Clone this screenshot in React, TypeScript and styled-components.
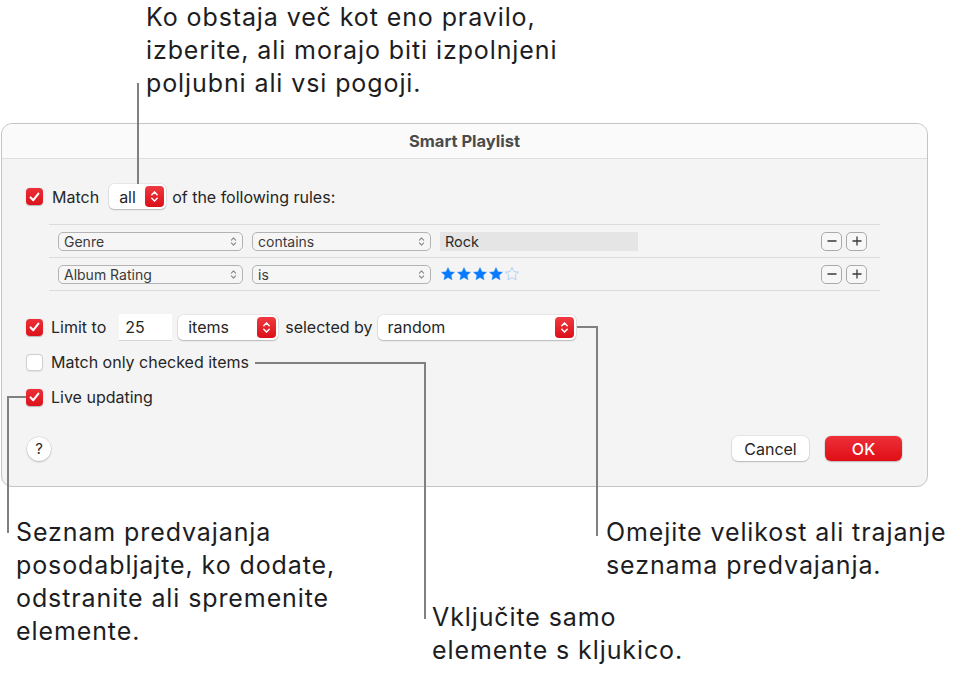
import * as React from "react";
import styled, { createGlobalStyle } from "styled-components";

const GlobalStyle = createGlobalStyle`
  html, body {
    margin: 0;
    padding: 0;
    background: #ffffff;
  }
  body {
    font-family: Inter, "Liberation Sans", sans-serif;
    color: #1d1d1f;
    -webkit-font-smoothing: antialiased;
  }
`;

const Figure = styled.div`
  position: relative;
  width: 968px;
  height: 673px;
  overflow: hidden;
  background: #ffffff;
`;

const Note = styled.div<{ $left: number; $top: number; $width?: number }>`
  flex: none;
  margin-left: ${(p) => p.$left}px;
  margin-top: ${(p) => p.$top}px;
  width: ${(p) => (p.$width ? `${p.$width}px` : "auto")};
  font-size: 25px;
  letter-spacing: 0.9px;
  line-height: 33px;
  white-space: nowrap;
  color: #1d1d1f;
`;

const BottomNotes = styled.div`
  display: flex;
  align-items: flex-start;
`;

const Dialog = styled.div`
  margin: 23px 0 0 1px;
  width: 927px;
  box-sizing: border-box;
  border: 1px solid #c4c4c4;
  border-radius: 11px;
  background: #f4f4f4;
  overflow: hidden;
`;

const TitleBar = styled.div`
  height: 34px;
  display: flex;
  align-items: center;
  justify-content: center;
  background: #fafafa;
  border-bottom: 1px solid #dedede;
  font-size: 16.5px;
  font-weight: 700;
  color: #4b4b4b;
`;

const Body = styled.div`
  padding: 0 25px 25px 24px;
  display: flex;
  flex-direction: column;
  font-size: 16px;
  color: #262626;
`;

const Row = styled.div<{ $mt: number; $h: number }>`
  display: flex;
  align-items: center;
  margin-top: ${(p) => p.$mt}px;
  height: ${(p) => p.$h}px;
`;

const Label = styled.span<{ $ml?: number }>`
  margin-left: ${(p) => p.$ml ?? 0}px;
  white-space: nowrap;
`;

const Box = styled.span<{ $checked: boolean }>`
  flex: none;
  width: 17px;
  height: 17px;
  box-sizing: border-box;
  border-radius: 4px;
  display: flex;
  align-items: center;
  justify-content: center;
  background: ${(p) =>
    p.$checked ? "linear-gradient(#ec2f37, #dc121b)" : "#ffffff"};
  border: ${(p) => (p.$checked ? "none" : "1px solid #cfcfcf")};
  box-shadow: ${(p) =>
    p.$checked ? "0 0.5px 1px rgba(0,0,0,0.25)" : "0 0.5px 1px rgba(0,0,0,0.08)"};
`;

const SelectBox = styled.div<{ $w: number; $ml: number }>`
  flex: none;
  width: ${(p) => p.$w}px;
  margin-left: ${(p) => p.$ml}px;
  height: 25px;
  box-sizing: border-box;
  display: flex;
  align-items: center;
  justify-content: space-between;
  padding: 0 2px 0 10px;
  background: #ffffff;
  border-radius: 5px;
  box-shadow: 0 0 0 0.5px rgba(0, 0, 0, 0.1), 0 1px 1.5px rgba(0, 0, 0, 0.2);
`;

const Stepper = styled.span`
  width: 19px;
  height: 21px;
  border-radius: 4px;
  background: linear-gradient(#ef3a40, #dc0f18);
  display: flex;
  align-items: center;
  justify-content: center;
`;

const NumField = styled.div`
  flex: none;
  width: 53px;
  height: 26px;
  margin-left: 13px;
  box-sizing: border-box;
  padding-left: 6px;
  display: flex;
  align-items: center;
  background: #ffffff;
  box-shadow: 0 1px 0 rgba(0, 0, 0, 0.12);
`;

const RulesBox = styled.div`
  margin: 15px 0 0 23px;
  width: 831px;
  border-bottom: 1px solid #dcdcdc;
`;

const RuleRow = styled.div`
  height: 32px;
  border-top: 1px solid #dcdcdc;
  display: flex;
  align-items: center;
  gap: 9px;
  padding: 0 13px 0 9px;
`;

const RuleSelect = styled.div<{ $w: number }>`
  flex: none;
  width: ${(p) => p.$w}px;
  height: 19px;
  box-sizing: border-box;
  border: 1px solid #b3b3b3;
  border-radius: 5px;
  display: flex;
  align-items: center;
  justify-content: space-between;
  padding: 0 5px 0 5px;
  font-size: 14px;
  color: #3a3a3a;
  background: #f6f6f6;
`;

const ValueField = styled.div`
  flex: none;
  width: 198px;
  height: 19px;
  background: #e5e5e5;
  display: flex;
  align-items: center;
  padding-left: 5px;
  box-sizing: border-box;
  font-size: 14.5px;
  color: #2a2a2a;
`;

const Stars = styled.div`
  display: flex;
  width: 198px;
`;

const Spacer = styled.div`
  flex: 1;
`;

const IconBtns = styled.div`
  display: flex;
  gap: 4px;
`;

const IconBtn = styled.span`
  width: 21px;
  height: 19px;
  box-sizing: border-box;
  border: 1px solid #a9a9a9;
  border-radius: 5px;
  background: #f7f7f7;
  display: flex;
  align-items: center;
  justify-content: center;
`;

const Footer = styled.div`
  margin-top: 30px;
  display: flex;
  align-items: center;
`;

const HelpBtn = styled.span`
  width: 24px;
  height: 24px;
  margin-left: 1px;
  border-radius: 50%;
  background: #ffffff;
  box-shadow: 0 0 0 0.5px rgba(0, 0, 0, 0.12), 0 1px 2px rgba(0, 0, 0, 0.2);
  display: flex;
  align-items: center;
  justify-content: center;
  font-size: 15px;
  color: #2a2a2a;
`;

const Button = styled.span<{ $primary?: boolean }>`
  width: 77px;
  height: 25px;
  margin-left: ${(p) => (p.$primary ? 16 : 0)}px;
  border-radius: 6px;
  display: flex;
  align-items: center;
  justify-content: center;
  font-size: 16px;
  color: ${(p) => (p.$primary ? "#ffffff" : "#262626")};
  font-weight: ${(p) => (p.$primary ? 500 : 400)};
  background: ${(p) =>
    p.$primary ? "linear-gradient(#ec3139, #e00d16)" : "#ffffff"};
  box-shadow: 0 0 0 0.5px rgba(0, 0, 0, 0.12), 0 1px 1.5px rgba(0, 0, 0, 0.2);
`;

const Leaders = styled.svg`
  position: absolute;
  left: 0;
  top: 0;
  pointer-events: none;
`;

const Check = () => (
  <svg width="11" height="10" viewBox="0 0 11 10">
    <path
      d="M1.6 5.4 L4.3 8.2 L9.4 1.6"
      stroke="#fff"
      strokeWidth="2.1"
      fill="none"
      strokeLinecap="round"
      strokeLinejoin="round"
    />
  </svg>
);

const Checkbox = ({ checked }: { checked: boolean }) => (
  <Box $checked={checked}>{checked && <Check />}</Box>
);

const Chevrons = ({ color, w, h }: { color: string; w: number; h: number }) => (
  <svg width={w} height={h} viewBox="0 0 9 14">
    <path
      d="M1.8 5.2 L4.5 2.4 L7.2 5.2 M1.8 8.8 L4.5 11.6 L7.2 8.8"
      stroke={color}
      strokeWidth="1.5"
      fill="none"
      strokeLinecap="round"
      strokeLinejoin="round"
    />
  </svg>
);

const Select = ({ value, w, ml }: { value: string; w: number; ml: number }) => (
  <SelectBox $w={w} $ml={ml}>
    <span>{value}</span>
    <Stepper>
      <Chevrons color="#fff" w={9} h={15} />
    </Stepper>
  </SelectBox>
);

const Rule = ({ value, w }: { value: string; w: number }) => (
  <RuleSelect $w={w}>
    <span>{value}</span>
    <Chevrons color="#8a8a8a" w={7} h={11} />
  </RuleSelect>
);

const Star = ({ filled }: { filled: boolean }) => (
  <svg width="16" height="16" viewBox="0 0 24 24">
    <path
      d="M12 2.2l2.95 6.3 6.85.75-5.1 4.7 1.4 6.8L12 17.3l-6.1 3.45 1.4-6.8-5.1-4.7 6.85-.75z"
      fill={filled ? "#0a7bff" : "none"}
      stroke={filled ? "#0a7bff" : "#a8cbf7"}
      strokeWidth={filled ? 0.5 : 1.3}
      strokeLinejoin="round"
    />
  </svg>
);

const Minus = () => (
  <svg width="12" height="12" viewBox="0 0 12 12">
    <path d="M1.5 6 H10.5" stroke="#3a3a3a" strokeWidth="1.3" />
  </svg>
);

const Plus = () => (
  <svg width="12" height="12" viewBox="0 0 12 12">
    <path d="M1.5 6 H10.5 M6 1.5 V10.5" stroke="#3a3a3a" strokeWidth="1.3" />
  </svg>
);

const AddRemove = () => (
  <IconBtns>
    <IconBtn>
      <Minus />
    </IconBtn>
    <IconBtn>
      <Plus />
    </IconBtn>
  </IconBtns>
);

export default function App() {
  return (
    <Figure>
      <GlobalStyle />
      <Note $left={146} $top={1}>
        Ko obstaja več kot eno pravilo,
        <br />
        izberite, ali morajo biti izpolnjeni
        <br />
        poljubni ali vsi pogoji.
      </Note>

      <Dialog>
        <TitleBar>Smart Playlist</TitleBar>
        <Body>
          <Row $mt={25} $h={25}>
            <Checkbox checked />
            <Label $ml={9}>Match</Label>
            <Select value="all" w={57} ml={10} />
            <Label $ml={6}>of the following rules:</Label>
          </Row>

          <RulesBox>
            <RuleRow>
              <Rule value="Genre" w={185} />
              <Rule value="contains" w={179} />
              <ValueField>Rock</ValueField>
              <Spacer />
              <AddRemove />
            </RuleRow>
            <RuleRow>
              <Rule value="Album Rating" w={185} />
              <Rule value="is" w={179} />
              <Stars>
                {[true, true, true, true, false].map((f, i) => (
                  <Star key={i} filled={f} />
                ))}
              </Stars>
              <Spacer />
              <AddRemove />
            </RuleRow>
          </RulesBox>

          <Row $mt={23} $h={26}>
            <Checkbox checked />
            <Label $ml={8}>Limit to</Label>
            <NumField>25</NumField>
            <Select value="items" w={100} ml={6} />
            <Label $ml={7}>selected by</Label>
            <Select value="random" w={198} ml={5} />
          </Row>

          <Row $mt={13} $h={18}>
            <Checkbox checked={false} />
            <Label $ml={8}>Match only checked items</Label>
          </Row>

          <Row $mt={17} $h={18}>
            <Checkbox checked />
            <Label $ml={8}>Live updating</Label>
          </Row>

          <Footer>
            <HelpBtn>?</HelpBtn>
            <Spacer />
            <Button>Cancel</Button>
            <Button $primary>OK</Button>
          </Footer>
        </Body>
      </Dialog>

      <BottomNotes>
        <Note $left={16} $top={29} $width={416}>
          Seznam predvajanja
          <br />
          posodabljajte, ko dodate,
          <br />
          odstranite ali spremenite
          <br />
          elemente.
        </Note>
        <Note $left={0} $top={114} $width={174}>
          Vključite samo
          <br />
          elemente s kljukico.
        </Note>
        <Note $left={0} $top={29}>
          Omejite velikost ali trajanje
          <br />
          seznama predvajanja.
        </Note>
      </BottomNotes>

      <Leaders width="968" height="673" viewBox="0 0 968 673">
        <g stroke="#808080" strokeWidth="2" fill="none">
          <path d="M138 83 V184" />
          <path d="M26 397 H8 V533" />
          <path d="M255 363 H425 V619" />
          <path d="M577 327 H597 V536" />
        </g>
      </Leaders>
    </Figure>
  );
}
